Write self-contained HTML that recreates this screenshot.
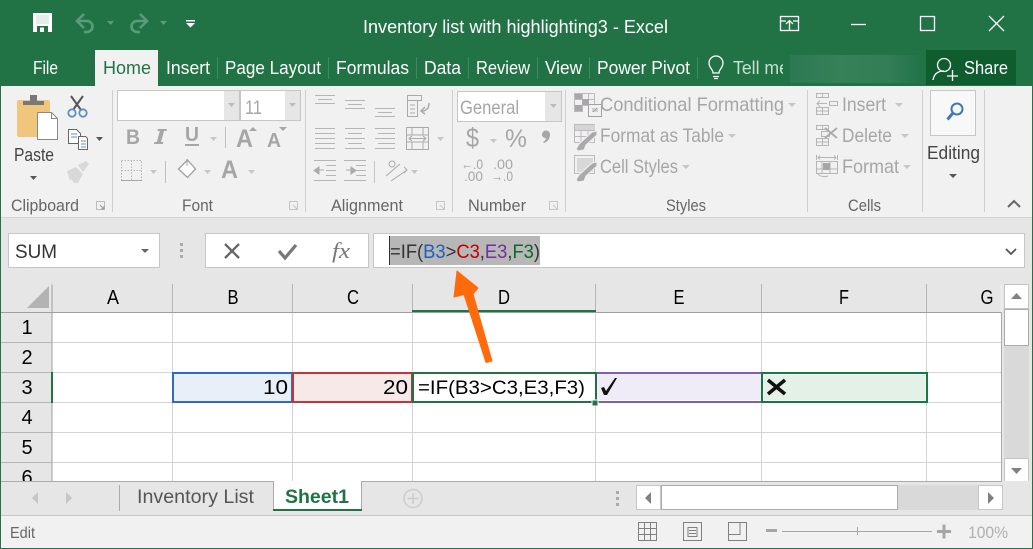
<!DOCTYPE html>
<html><head><meta charset="utf-8"><style>
html,body{margin:0;padding:0;background:#f1f1f1;overflow:hidden}
svg{display:block}
text{font-family:"Liberation Sans",sans-serif;white-space:pre}
.t{fill:#fff;font-size:18.5px}
.g{fill:#a6a6a6;font-size:19.5px}
.l{fill:#666;font-size:16.5px}
.h{fill:#000;font-size:20px;text-anchor:middle}
.c{fill:#000;font-size:20px}
</style></head><body>
<svg width="1033" height="549" viewBox="0 0 1033 549" xmlns="http://www.w3.org/2000/svg">
<defs><clipPath id="tell"><rect x="700" y="50" width="83" height="36"/></clipPath><clipPath id="r6"><rect x="0" y="462" width="52" height="19"/></clipPath>
<linearGradient id="blur" x1="0" x2="1" y1="0" y2="0"><stop offset="0" stop-color="#2c7a52"/><stop offset=".4" stop-color="#378058"/><stop offset=".75" stop-color="#337e56"/><stop offset="1" stop-color="#23744a"/></linearGradient></defs>
<!-- title -->
<rect width="1033" height="86" fill="#217346"/>
<rect x="790" y="55" width="130" height="28" fill="url(#blur)"/>
<rect x="926" y="50" width="90" height="35" fill="#0f5c2f"/>
<rect x="95" y="50" width="63" height="36" fill="#f1f1f1"/>
<path d="M33 13h19v19H33z" fill="#fff"/><path d="M36 15h13v9H36z" fill="#217346" opacity=".12"/><path d="M37 26h11v6H37z" fill="#217346"/><path d="M40 27.500h4v4.500h-4z" fill="#fff"/>
<g fill="none" stroke="#5c9b7d" stroke-width="2.600"><path d="M77 21h10a5.500 5.500 0 0 1 0 11h-3"/><path d="M84 14l-7 7 7 7"/><path d="M147 21h-10a5.500 5.500 0 0 0 0 11h3"/><path d="M140 14l7 7-7 7"/></g>
<path d="M107 21h7l-3.500 4zM160 21h7l-3.500 4z" fill="#5c9b7d"/>
<path d="M186 20h9v1.500h-9zM186 23h9l-4.500 4.500z" fill="#fff"/>
<text class="t" x="363" y="33" textLength="305" lengthAdjust="spacingAndGlyphs">Inventory list with highlighting3 - Excel</text>
<g fill="none" stroke="#fff" stroke-width="1.300"><rect x="780.500" y="16.500" width="18" height="14"/><path d="M780 21h6M793 21h6M789.500 30v-9M786 24l3.500-3.500 3.500 3.500"/><path d="M851 24.500h15"/><rect x="920.500" y="16.500" width="14" height="14"/><path d="M989 16l15 15M1004 16l-15 15"/></g>
<text class="t" x="33" y="74" textLength="25" lengthAdjust="spacingAndGlyphs">File</text>
<text class="t" x="103" y="74" textLength="48" lengthAdjust="spacingAndGlyphs" style="fill:#217346">Home</text>
<text class="t" x="166" y="74" textLength="44" lengthAdjust="spacingAndGlyphs">Insert</text>
<text class="t" x="225" y="74" textLength="96" lengthAdjust="spacingAndGlyphs">Page Layout</text>
<text class="t" x="336" y="74" textLength="73" lengthAdjust="spacingAndGlyphs">Formulas</text>
<text class="t" x="424" y="74" textLength="37" lengthAdjust="spacingAndGlyphs">Data</text>
<text class="t" x="476" y="74" textLength="54" lengthAdjust="spacingAndGlyphs">Review</text>
<text class="t" x="545" y="74" textLength="37" lengthAdjust="spacingAndGlyphs">View</text>
<text class="t" x="597" y="74" textLength="93" lengthAdjust="spacingAndGlyphs">Power Pivot</text>
<g clip-path="url(#tell)"><text class="t" x="733" y="74" textLength="56" lengthAdjust="spacingAndGlyphs" style="fill:#c8dfd2">Tell me</text></g>
<text class="t" x="964" y="74" textLength="44" lengthAdjust="spacingAndGlyphs">Share</text>
<path d="M217.500 57v22M328.500 57v22M416.500 57v22M468.500 57v22M537.500 57v22M589.500 57v22M697.500 57v22" stroke="#3f8a62"/>
<g fill="none" stroke="#fff" stroke-width="1.300"><path d="M713 73c0-4-4-5-4-10a7 7 0 0 1 14 0c0 5-4 6-4 10z"/><path d="M713 76.500h6M714 78.500h4"/><circle cx="944" cy="65" r="6.500"/><path d="M933 80c1-6 5-9 11-9M947 76h11M952.500 70v11"/></g>
<!-- ribbon -->
<rect x="0" y="86" width="1033" height="132" fill="#f1f1f1"/>
<rect x="0" y="217" width="1033" height="1" fill="#d5d5d5"/>
<path d="M112.500 90v122M305.500 90v122M452.500 90v122M565.500 90v122M807.500 90v122M922.500 90v122M984.500 90v122" stroke="#cfcfcf"/>
<!-- clipboard -->
<rect x="17" y="100" width="33" height="37" rx="2" fill="#f0c67c"/>
<path d="M23 105v-4h7v-6h7v6h7v4z" fill="#787878"/>
<path d="M37.500 112.500h14l6 6v21h-20z" fill="#fff" stroke="#8a8a8a"/><path d="M51.500 112.500v6h6" fill="none" stroke="#8a8a8a"/>
<g fill="none" stroke="#555" stroke-width="2"><path d="M71 96l10 14M83 96L73 110"/></g>
<g fill="none" stroke="#5d8fc4" stroke-width="1.800"><circle cx="72" cy="113" r="3.700"/><circle cx="83" cy="113" r="3.700"/></g>
<g fill="#fff" stroke="#666"><path d="M68.500 129.500h8l4 4v10h-12z"/><path d="M78.500 136.500h7l2 2v11h-9z"/></g>
<path d="M71 134h6M71 137h6M81 141h5M81 144h5M81 147h5" stroke="#5d8fc4"/>
<path d="M96 137h7l-3.500 4zM30 176h7l-3.500 4z" fill="#555"/>
<path d="M67 171l9-4 7 7-5 9h-4l-3-4-1 2zM78 165l8-4 3 3-6 8z" fill="#d8d8d8"/>
<text x="14" y="161" textLength="40" lengthAdjust="spacingAndGlyphs" style="fill:#444;font-size:18.500px">Paste</text>
<text class="l" x="11" y="211" textLength="68" lengthAdjust="spacingAndGlyphs">Clipboard</text>
<g fill="none" stroke="#999"><path d="M96.500 201.500h8v8h-8z" stroke="#bbb"/><path d="M100 205l4 4M104 206v3h-3"/></g>
<!-- font -->
<rect x="117.500" y="90.500" width="183" height="30" fill="#fff" stroke="#c6c6c6"/>
<rect x="224" y="91" width="15" height="29" fill="#e6e6e6"/><rect x="239" y="91" width="2" height="29" fill="#c6c6c6"/><rect x="285" y="91" width="15" height="29" fill="#e6e6e6"/>
<path d="M228 103h7l-3.500 4zM289 103h7l-3.500 4z" fill="#bbb"/>
<text x="245" y="114" textLength="17" lengthAdjust="spacingAndGlyphs" style="fill:#a6a6a6;font-size:19px">11</text>
<text x="126" y="144" textLength="14" lengthAdjust="spacingAndGlyphs" style="fill:#a6a6a6;font-size:21px;font-weight:bold">B</text>
<path d="M158 129h9l-.6 2h-2.400l-3 11h2.400l-.6 2h-9l.6-2h2.400l3-11h-2.400z" fill="#a6a6a6"/>
<text x="185" y="141" textLength="14" lengthAdjust="spacingAndGlyphs" style="fill:#a6a6a6;font-size:20px;font-weight:bold">U</text>
<rect x="185" y="144" width="14" height="2" fill="#a6a6a6"/>
<path d="M210 137h7l-3.500 4z" fill="#c6c6c6"/><rect x="225" y="127" width="1" height="21" fill="#c0c0c0"/>
<text x="236" y="147" textLength="17" lengthAdjust="spacingAndGlyphs" style="fill:#a6a6a6;font-size:25px;font-weight:bold">A</text>
<text x="267" y="147" textLength="14" lengthAdjust="spacingAndGlyphs" style="fill:#a6a6a6;font-size:20px;font-weight:bold">A</text>
<path d="M249 131l4-4 4 4zM279 127h8l-4 4z" fill="#a6a6a6"/>
<path d="M121.500 160.500h20v20h-20zM131.500 160.500v20M121.500 170.500h20" fill="none" stroke="#b5b5b5" stroke-dasharray="1.500 1.500"/><path d="M121 180.500h21" stroke="#a6a6a6"/>
<path d="M150 170h7l-3.500 4zM204 170h7l-3.500 4zM248 170h7l-3.500 4z" fill="#c6c6c6"/><rect x="165" y="161" width="1" height="22" fill="#c0c0c0"/>
<path d="M178.500 169l9-9 8 9-8 8.500z" fill="#fff" stroke="#a0a0a0" stroke-width="1.300"/><path d="M187 159v7" stroke="#a0a0a0"/>
<text x="221" y="178" textLength="17" lengthAdjust="spacingAndGlyphs" style="fill:#a6a6a6;font-size:25px;font-weight:bold">A</text>
<text class="l" x="182" y="211" textLength="31" lengthAdjust="spacingAndGlyphs">Font</text>
<g fill="none" stroke="#c6c6c6"><path d="M289.500 201.500h8v8h-8zM293 205l4 4"/><path d="M436.500 201.500h8v8h-8zM440 205l4 4"/><path d="M549.500 201.500h8v8h-8zM553 205l4 4"/></g>
<!-- alignment -->
<path d="M315 95.500h20M318 99.500h14M315 103.500h20M345 100.500h20M348 104.500h14M345 108.500h20M375 108.500h20M378 112.500h14M375 116.500h20M315 128.500h20M315 133.500h20M315 138.500h20M315 143.500h20M315 148.500h20M345 128.500h20M348 133.500h14M345 138.500h20M348 143.500h14M345 148.500h20M375 128.500h20M378 133.500h17M375 138.500h20M378 143.500h17M375 148.500h20" stroke="#b5b5b5"/>
<path d="M314 160.500h22M326 165.500h10M326 170.500h10M326 175.500h10M314 180.500h22M344 160.500h22M356 165.500h10M356 170.500h10M356 175.500h10M344 180.500h22" stroke="#b5b5b5"/>
<path d="M324 170h-5M319 167l-5 3.500 5 3.500zM346 170h5M351 167l5 3.500-5 3.500z" stroke="#aaa" fill="#aaa"/>
<rect x="374" y="161" width="1" height="22" fill="#c6c6c6"/>
<g fill="none" stroke="#aaa"><path d="M407.500 95.500h14v5h-14zM407.500 100.500h10v16h-10zM410 105h5M410 109h5M410 113h5"/><path d="M429 103c0 6-3 8-8 8M425 107l-4 4 4 3" stroke-width="1.500"/><rect x="406.500" y="127.500" width="22" height="22"/><path d="M406 135h23M406 142h23M412 127v8M423 127v8M412 142v8M423 142v8"/><path d="M410 138.500h15M412 136l-3 2.500 3 2.500M423 136l3 2.500-3 2.500"/><path d="M386 176l14-12M391 181l16-11M404 167l3 3-3 3"/><circle cx="392" cy="164" r="3"/></g>
<path d="M437 137h7l-3.500 4zM411 170h7l-3.500 4z" fill="#c6c6c6"/>
<text class="l" x="331" y="211" textLength="72" lengthAdjust="spacingAndGlyphs">Alignment</text>
<!-- number -->
<rect x="457.500" y="91.500" width="104" height="30" fill="#fff" stroke="#c6c6c6"/><rect x="545" y="92" width="16" height="29" fill="#e6e6e6"/>
<path d="M550 104h7l-3.500 4z" fill="#bbb"/>
<text x="460" y="114" textLength="59" lengthAdjust="spacingAndGlyphs" style="fill:#a6a6a6;font-size:19.500px">General</text>
<text x="466" y="147" textLength="13" lengthAdjust="spacingAndGlyphs" style="fill:#a6a6a6;font-size:27px">$</text>
<path d="M490 139h7l-3.500 4z" fill="#c6c6c6"/>
<text x="505" y="147" textLength="22" lengthAdjust="spacingAndGlyphs" style="fill:#a6a6a6;font-size:25px">%</text>
<path d="M542 134a4 4 0 0 1 8 1c0 4-3 7-6 8l-1-1c2-1 3-3 3-4a3.500 3.500 0 0 1-4-4z" fill="#a6a6a6"/>
<text x="461" y="169" textLength="22" lengthAdjust="spacingAndGlyphs" style="fill:#a6a6a6;font-size:14px">←.0</text><text x="464" y="181" textLength="19" lengthAdjust="spacingAndGlyphs" style="fill:#a6a6a6;font-size:14px">.00</text><text x="493" y="169" textLength="20" lengthAdjust="spacingAndGlyphs" style="fill:#a6a6a6;font-size:14px">.00</text><text x="491" y="181" textLength="22" lengthAdjust="spacingAndGlyphs" style="fill:#a6a6a6;font-size:14px">→.0</text>
<text class="l" x="468" y="211" textLength="58" lengthAdjust="spacingAndGlyphs">Number</text>
<!-- styles -->
<g fill="none" stroke="#c0b8c0"><path d="M574.500 102.500v-9h20v12"/><path d="M574.500 93.500v18h8v-18M574.500 99.500h20M574.500 105.500h14M588.500 93.500v6"/><rect x="574.500" y="124.500" width="20" height="18"/><path d="M574 130.500h21M574 136.500h21M581 125v18M588 125v18"/><rect x="574.500" y="155.500" width="20" height="18"/></g>
<rect x="575" y="94" width="7" height="5" fill="#a8a8a8"/><rect x="582" y="99" width="7" height="6" fill="#a8a8a8"/><rect x="575" y="105" width="7" height="6" fill="#a8a8a8"/>
<rect x="588.500" y="104.500" width="13" height="12" fill="#f1f1f1" stroke="#a0a0a0"/><path d="M593 112l4-4M592 109h6M592 111h6" stroke="#999" stroke-width=".8"/>
<path d="M575 125h20v5h-20z" fill="#d5d5d5"/><path d="M577 158h16v14h-16z" fill="#d8d8d8"/>
<path d="M579 144l13-12 5-1v4l-11 10-2 5-6 1-2-2z" fill="#aaa" stroke="#f1f1f1"/><path d="M579 175l13-12 5-1v4l-11 10-2 5-6 1-2-2z" fill="#aaa" stroke="#f1f1f1"/>
<text class="g" x="600" y="111" textLength="184" lengthAdjust="spacingAndGlyphs">Conditional Formatting</text>
<text class="g" x="600" y="142" textLength="124" lengthAdjust="spacingAndGlyphs">Format as Table</text>
<text class="g" x="600" y="173" textLength="78" lengthAdjust="spacingAndGlyphs">Cell Styles</text>
<path d="M788 103h8l-4 4zM728 134h8l-4 4zM682 165h8l-4 4z" fill="#c6c6c6"/>
<text class="l" x="666" y="211" textLength="40" lengthAdjust="spacingAndGlyphs">Styles</text>
<!-- cells -->
<g fill="none" stroke="#b5b5b5"><path d="M816.500 93.500h12v4h-12zM822.500 93.500v4M816.500 107.500h12v7h-12zM816.500 111h12M822.500 107.500v7"/><rect x="829.500" y="101.500" width="8" height="4"/><path d="M817 103.500h10M820 100.500l-3 3 3 3"/><path d="M816.500 125.500h12v4h-12zM822.500 125v5M816.500 138.500h12v7h-12zM816.500 142h12M822.500 138v7M821.500 131.500h8v5h-8z"/><path d="M816.500 155v5M837.500 155v5M818 157.500h18M820 155.500l-2 2 2 2M834 155.500l2 2-2 2M816.500 161.500h21v12h-21zM822 162v12M830 162v12M816.500 169h21M818 174c2 3 8 3 10 2"/></g>
<path d="M825 128l12 10M837 128l-12 10" stroke="#aaa" stroke-width="1.800"/><rect x="823" y="163" width="7" height="7" fill="#a6a6a6"/>
<text class="g" x="842" y="111" textLength="44" lengthAdjust="spacingAndGlyphs">Insert</text>
<text class="g" x="842" y="142" textLength="50" lengthAdjust="spacingAndGlyphs">Delete</text>
<text class="g" x="842" y="173" textLength="57" lengthAdjust="spacingAndGlyphs">Format</text>
<path d="M895 103h8l-4 4zM901 134h8l-4 4zM903 165h8l-4 4z" fill="#c6c6c6"/>
<text class="l" x="848" y="211" textLength="33" lengthAdjust="spacingAndGlyphs">Cells</text>
<rect x="930.500" y="90.500" width="45" height="45" fill="#f8f8f8" stroke="#c6c6c6"/>
<circle cx="957" cy="109" r="5.500" fill="none" stroke="#3f78b8" stroke-width="2"/><path d="M952.500 113.500l-5 6" stroke="#3f78b8" stroke-width="3"/>
<text x="927" y="159" textLength="53" lengthAdjust="spacingAndGlyphs" style="fill:#444;font-size:18.500px">Editing</text>
<path d="M949 174h8l-4 4z" fill="#555"/>
<path d="M1008 207l6-6 6 6" fill="none" stroke="#666" stroke-width="2"/>
<!-- formula bar -->
<rect x="0" y="218" width="1033" height="66" fill="#e6e6e6"/>
<rect x="8.500" y="233.500" width="151" height="34" fill="#fff" stroke="#c6c6c6"/>
<text x="15" y="258" textLength="42" lengthAdjust="spacingAndGlyphs" style="fill:#333;font-size:19px">SUM</text>
<path d="M141 249h8l-4 4z" fill="#666"/>
<path d="M180 243h3v3h-3zM180 249h3v3h-3zM180 255h3v3h-3z" fill="#aaa"/>
<rect x="205.500" y="233.500" width="163" height="34" fill="#fff" stroke="#c6c6c6"/>
<path d="M225 244l14 14M239 244l-14 14" stroke="#666" stroke-width="2.300"/>
<path d="M279 251l6 7 11-13" fill="none" stroke="#777" stroke-width="3.200"/>
<text x="332" y="258" textLength="18" lengthAdjust="spacingAndGlyphs" style="font-family:'Liberation Serif',serif;font-style:italic;font-size:22px;fill:#777">fx</text>
<rect x="373.500" y="233.500" width="651" height="34" fill="#fff" stroke="#c6c6c6"/>
<rect x="389" y="236" width="151" height="29" fill="#b7b7b7"/><rect x="389" y="236" width="1" height="29" fill="#333"/>
<text x="390" y="258" textLength="150" lengthAdjust="spacingAndGlyphs" style="font-size:19.500px;fill:#333">=IF(<tspan fill="#1f5fbf">B3</tspan>&gt;<tspan fill="#c00000">C3</tspan>,<tspan fill="#7030a0">E3</tspan>,<tspan fill="#0a6a2a">F3</tspan>)</text>
<path d="M1006 249l5 5 5-5" fill="none" stroke="#555" stroke-width="1.800"/>
<!-- grid -->
<rect x="52" y="312" width="949" height="169" fill="#fff"/>
<path d="M52 342.500h949M52 372.500h949M52 402.500h949M52 432.500h949M52 462.500h949M172.500 312v169M292.500 312v169M412.500 312v169M595.500 312v169M761.500 312v169M926.500 312v169" stroke="#d4d4d4"/>
<rect x="0" y="284" width="1001" height="28" fill="#e6e6e6"/><rect x="0" y="312" width="52" height="169" fill="#e6e6e6"/>
<path d="M172.500 284v28M292.500 284v28M412.500 284v28M595.500 284v28M761.500 284v28M926.500 284v28M0 342.500h52M0 372.500h52M0 402.500h52M0 432.500h52M0 462.500h52" stroke="#b5b5b5"/>
<path d="M52 284.500v196.500M0 312.500h1001" stroke="#9f9f9f"/>
<rect x="1001" y="312" width="1" height="169" fill="#ababab"/>
<path d="M27 308l22-22v22z" fill="#b3b3b3"/>
<rect x="412" y="310" width="184" height="2" fill="#217346"/><rect x="51" y="372" width="2" height="31" fill="#217346"/>
<text class="h" x="113" y="304" textLength="12" lengthAdjust="spacingAndGlyphs">A</text><text class="h" x="233" y="304" textLength="11" lengthAdjust="spacingAndGlyphs">B</text><text class="h" x="353" y="304" textLength="12" lengthAdjust="spacingAndGlyphs">C</text><text class="h" x="504" y="304" textLength="12" lengthAdjust="spacingAndGlyphs">D</text><text class="h" x="679" y="304" textLength="11" lengthAdjust="spacingAndGlyphs">E</text><text class="h" x="844" y="304" textLength="10" lengthAdjust="spacingAndGlyphs">F</text><text class="h" x="987" y="304" textLength="13" lengthAdjust="spacingAndGlyphs">G</text>
<text class="h" x="27" y="334">1</text><text class="h" x="27" y="364">2</text><text class="h" x="27" y="394">3</text><text class="h" x="27" y="424">4</text><text class="h" x="27" y="454">5</text><g clip-path="url(#r6)"><text class="h" x="27" y="484">6</text></g>
<!-- cells -->
<rect x="173" y="373" width="119" height="29" fill="#e8eff8" stroke="#2f6bc4" stroke-width="2"/>
<rect x="293" y="373" width="119" height="29" fill="#f8e9e9" stroke="#c0363c" stroke-width="2"/>
<rect x="596" y="372" width="165" height="31" fill="#efecf7"/><path d="M596 373h165M596 402h165" stroke="#7f5fb5" stroke-width="2"/><path d="M597 400.500h164" stroke="#fff"/>
<rect x="762" y="373" width="165" height="29" fill="#e3f1e6" stroke="#107c41" stroke-width="2"/><rect x="763.500" y="374.500" width="162" height="26" fill="none" stroke="#fff"/>
<rect x="413" y="373" width="183" height="29" fill="#fff" stroke="#217346" stroke-width="2"/>
<rect x="592" y="400" width="6" height="6" fill="#217346" stroke="#fff"/>
<text class="c" x="263" y="394" textLength="25" lengthAdjust="spacingAndGlyphs">10</text>
<text class="c" x="383" y="394" textLength="25" lengthAdjust="spacingAndGlyphs">20</text>
<text x="418" y="394" textLength="167" lengthAdjust="spacingAndGlyphs" style="fill:#000;font-size:19.500px">=IF(B3&gt;C3,E3,F3)</text>
<path d="M601 388l3-1 2 4 9-13h2l-10 17h-3z" fill="#111"/>
<path d="M768 380l17 14M785 380l-17 14" stroke="#111" stroke-width="3.500"/>
<!-- arrow -->
<path d="M457 271l-3 26 10-2.500 22 68 6-1.500-19-67 5-6z" fill="#ff6a0d" stroke="#ff6a0d" stroke-linejoin="round"/>
<!-- scrollbar -->
<rect x="1002" y="284" width="31" height="197" fill="#e6e6e6"/>
<rect x="1004" y="345" width="25" height="113" fill="#d9d9d9"/>
<rect x="1004.500" y="284.500" width="24" height="24" fill="#fff" stroke="#c6c6c6"/>
<rect x="1004.500" y="309.500" width="24" height="36" fill="#fff" stroke="#ababab"/>
<rect x="1004.500" y="458.500" width="24" height="24" fill="#fff" stroke="#c6c6c6"/>
<path d="M1011 299l5.500-6 5.500 6zM1011 468h11l-5.500 6z" fill="#808080"/>
<!-- tabs -->
<rect x="0" y="481" width="1033" height="34" fill="#e6e6e6"/>
<rect x="0" y="481" width="1002" height="1" fill="#ababab"/>
<path d="M38 492v12l-6-6zM66 492v12l6-6z" fill="#c6c6c6"/>
<rect x="119" y="485" width="1" height="26" fill="#ababab"/>
<text x="137" y="503" textLength="117" lengthAdjust="spacingAndGlyphs" style="fill:#555;font-size:19.500px">Inventory List</text>
<path d="M273.500 481.500v28M361.500 481.500v28" stroke="#ababab"/><rect x="274" y="481" width="87" height="29" fill="#fff"/><rect x="273" y="509" width="89" height="2" fill="#217346"/>
<text x="285" y="503" textLength="64" lengthAdjust="spacingAndGlyphs" style="fill:#217346;font-size:19.500px;font-weight:bold">Sheet1</text>
<circle cx="413" cy="498.500" r="9" fill="none" stroke="#ccc" stroke-width="1.500"/><path d="M413 493v11M407.500 498.500h11" stroke="#ccc" stroke-width="1.500"/>
<path d="M616 491h3v3h-3zM616 497h3v3h-3zM616 503h3v3h-3z" fill="#aaa"/>
<rect x="636" y="485" width="367" height="25" fill="#d9d9d9"/>
<rect x="636.500" y="485.500" width="24" height="24" fill="#fff" stroke="#c6c6c6"/>
<rect x="661.500" y="485.500" width="236" height="24" fill="#fff" stroke="#ababab"/>
<rect x="978.500" y="485.500" width="24" height="24" fill="#fff" stroke="#c6c6c6"/>
<path d="M651 492v12l-6-6zM988 492v12l6-6z" fill="#808080"/>
<!-- status -->
<rect x="0" y="515" width="1033" height="34" fill="#f1f1f1"/><rect x="0" y="515" width="1033" height="1" fill="#c6c6c6"/>
<text x="10" y="538" textLength="25" lengthAdjust="spacingAndGlyphs" style="fill:#666;font-size:16px">Edit</text>
<g fill="none" stroke="#808080"><path d="M638.500 522.500h18v18h-18zM644.500 522v19M650.500 522v19M638 528.500h19M638 534.500h19"/><path d="M683.500 522.500h18v18h-18zM688 527.500h9v9h-9zM689 530.500h7M689 533.500h7"/><path d="M728.500 522.500h18v18h-18zM728 534.500h12v-12"/></g>
<path d="M766 529h11v3h-11zM937 530h14v3h-14zM942.500 524.500h3v14h-3z" fill="#a6a6a6"/>
<path d="M782 531.500h150" stroke="#a6a6a6"/><path d="M857.500 527v8" stroke="#a6a6a6"/>
<text x="968" y="538" textLength="40" lengthAdjust="spacingAndGlyphs" style="fill:#b0b0b0;font-size:16.500px">100%</text>
<!-- window edges -->
<rect x="0" y="86" width="1" height="463" fill="#217346"/><rect x="1032" y="86" width="1" height="463" fill="#217346"/><rect x="0" y="548" width="1033" height="1" fill="#217346"/>
</svg>
</body></html>
